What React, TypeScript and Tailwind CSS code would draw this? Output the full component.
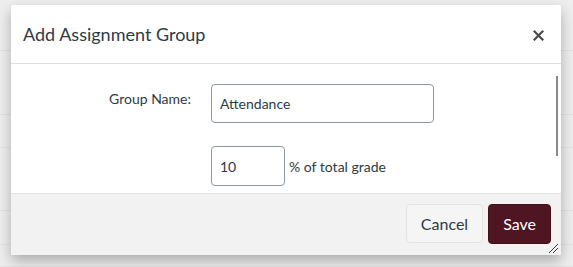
import React from 'react'

const FONT = { fontFamily: 'Lato, "Open Sans", "Liberation Sans", sans-serif' }

// Faint rows of the page that sits behind the modal overlay
const BG_ROWS = [51, 64, 33, 63, 34, 22]

function CloseIcon() {
    return (
        <svg width="11" height="11" viewBox="0 0 11 11" fill="none" stroke="#4a4a4a" strokeWidth={2.2} strokeLinecap="square">
            <path d="M1.5 1.5l8 8M9.5 1.5l-8 8" />
        </svg>
    )
}

function ResizeGrip() {
    return (
        <svg className="absolute right-[3px] bottom-[2px]" width="10" height="10" viewBox="0 0 10 10" fill="none" stroke="#3a3a3a" strokeWidth={1}>
            <path d="M1 10L10 1M5 10L10 5" />
        </svg>
    )
}

export default function App() {
    return (
        <div className="relative w-[573px] h-[267px] overflow-hidden bg-[#eeeeee]" style={FONT}>
            {/* page behind */}
            <div className="flex flex-col">
                {BG_ROWS.map((h, i) => (
                    <div key={i} className="border-b border-[#e2e2e2]" style={{ height: h }} />
                ))}
            </div>

            {/* dialog */}
            <div className="absolute left-[11px] top-[5px] w-[550px] h-[250px] flex flex-col bg-white rounded-[2px] shadow-[0_6px_14px_rgba(0,0,0,0.28)]">
                <div className="h-[59px] shrink-0 flex items-center justify-between pl-[12px] pr-[15px] border-b border-[#dddddd]">
                    <h2 className="text-[18px] text-[#2d3b45] leading-none">Add Assignment Group</h2>
                    <button className="w-[16px] h-[16px] flex items-center justify-center mt-[3px]">
                        <CloseIcon />
                    </button>
                </div>

                <div className="h-[129px] shrink-0 flex overflow-hidden">
                    <div className="flex-1 pt-[20px] flex flex-col gap-[23px]">
                        <div className="flex items-start">
                            <label className="w-[180px] text-right text-[14px] leading-[20px] pt-[5px] text-[#2d3b45]">Group Name:</label>
                            <input
                                readOnly
                                value="Attendance"
                                className="ml-[20px] w-[223px] h-[39px] px-[8px] text-[14px] text-[#2d3b45] border border-[#8c98a2] rounded-[4px] outline-none"
                                style={FONT}
                            />
                        </div>
                        <div className="flex items-center pl-[200px]">
                            <input
                                readOnly
                                value="10"
                                className="w-[74px] h-[40px] px-[8px] text-[14px] text-[#2d3b45] border border-[#8c98a2] rounded-[4px] outline-none"
                                style={FONT}
                            />
                            <span className="ml-[4px] text-[14px] text-[#2d3b45]">% of total grade</span>
                        </div>
                    </div>
                    <div className="w-[5px] shrink-0 pt-[12px]">
                        <div className="w-[2px] h-[80px] bg-[#8a8a8a]" />
                    </div>
                </div>

                <div className="relative flex-1 flex items-start justify-end gap-[5px] pt-[10px] pr-[10px] bg-[#f2f2f2] border-t border-[#e2e2e2]">
                    <button className="h-[39px] px-[14px] text-[16px] text-[#2d3b45] bg-[#f5f5f5] border border-[#e3e3e3] rounded-[4px]">
                        Cancel
                    </button>
                    <button className="h-[40px] px-[14px] text-[16px] text-white bg-[#4f1522] border border-[#43101c] rounded-[4px]">
                        Save
                    </button>
                    <ResizeGrip />
                </div>
            </div>
        </div>
    )
}
